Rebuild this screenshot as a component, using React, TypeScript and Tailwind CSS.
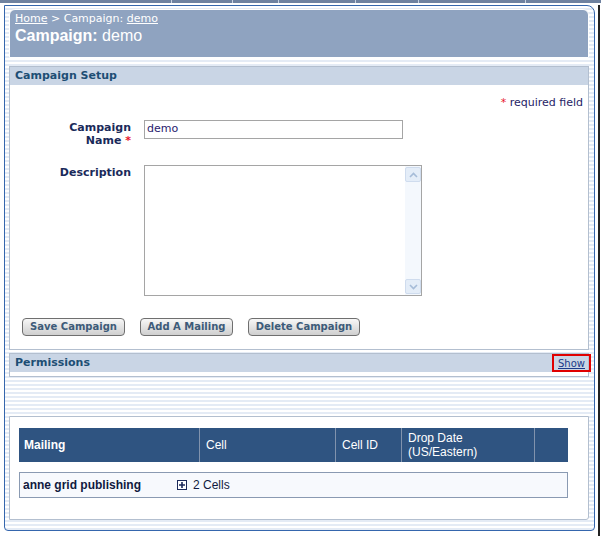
import React from 'react';

const stripes =
  'bg-[repeating-linear-gradient(180deg,#ffffff_0px,#ffffff_2px,#e4ebf5_2px,#e4ebf5_4px)]';

const Button: React.FC<{ label: string; width: string }> = ({ label, width }) => (
  <button
    className={`${width} h-[18px] rounded-[4px] border border-[#6f6f6f] bg-gradient-to-b from-[#f7f7f7] to-[#cfcfcf] text-[10px] font-bold leading-none text-[#3d5b79]`}
  >
    {label}
  </button>
);

const SectionHeader: React.FC<{ title: string; children?: React.ReactNode }> = ({ title, children }) => (
  <div className="flex h-[18px] items-center justify-between bg-[#c9d5e5] pl-[5px]">
    <span className="text-[11px] font-bold text-[#1d4e74]">{title}</span>
    {children}
  </div>
);

export default function App() {
  return (
    <div className="relative h-[539px] w-[601px] overflow-hidden bg-white font-['DejaVu_Sans',Verdana,sans-serif]">
      {/* top strip */}
      <div className="flex h-[3px] bg-[#6f82a0]">
        <div className="w-[172px] border-r border-[#c9d2e0]" />
        <div className="w-[61px] border-r border-[#c9d2e0]" />
        <div className="w-[46px] border-r border-[#c9d2e0]" />
        <div className="w-[77px] border-r border-[#c9d2e0]" />
        <div className="w-[63px] border-r border-[#c9d2e0]" />
        <div className="w-[107px] border-r border-[#c9d2e0]" />
        <div className="flex-1" />
      </div>

      <div className="mt-[2px] flex">
        <div
          className={`ml-[4px] h-[526px] w-[591px] rounded-tr-[8px] rounded-b-[4px] border border-[#3566ad] pl-[4px] pr-[5px] pt-[3px] ${stripes}`}
        >
          {/* page header */}
          <div className="h-[49px] rounded-t-[6px] border border-white bg-[#8fa3c0] pl-[5px] pt-[2px] text-white">
            <div className="text-[11px] leading-[14px]">
              <span className="underline">Home</span> &gt; Campaign: <span className="underline">demo</span>
            </div>
            <div className="font-['Liberation_Sans',Arial,sans-serif] text-[16px] leading-[19px]">
              <span className="font-bold">Campaign:</span> demo
            </div>
          </div>

          {/* campaign setup */}
          <div className="mt-[8px] h-[284px] border border-[#b3bfcf] bg-white">
            <SectionHeader title="Campaign Setup" />
            <div className="pr-[5px] pt-[11px] text-right text-[11px] leading-[13px] text-[#1f2466]">
              <span className="text-[#e8152c]">*</span> required field
            </div>
            <div className="mt-[11px] flex items-start">
              <div className="w-[121px] pt-[1px] text-right text-[11px] font-bold leading-[13px] text-[#1a2a5a]">
                Campaign
                <br />
                Name <span className="text-[#e8152c]">*</span>
              </div>
              <div className="ml-[13px] flex h-[19px] w-[259px] items-center border border-[#a5a5a5] pl-[2px] text-[11px] text-[#2a226e]">
                demo
              </div>
            </div>
            <div className="mt-[18px] flex items-start">
              <div className="w-[121px] pt-[1px] text-right text-[11px] font-bold leading-[13px] text-[#1a2a5a]">
                Description
              </div>
              <div className="ml-[13px] flex h-[131px] w-[278px] border border-[#a5a5a5]">
                <div className="flex-1" />
                <div className="flex w-[16px] flex-col justify-between bg-[#f4f8fd] py-[1px]">
                  <div className="flex h-[15px] items-center justify-center rounded-[2px] border border-[#cfdcee] bg-[#e4edf8]">
                    <svg width="9" height="6" viewBox="0 0 9 6">
                      <path d="M1 5 L4.5 1.5 L8 5" stroke="#a6bcd8" strokeWidth="1.6" fill="none" />
                    </svg>
                  </div>
                  <div className="flex h-[15px] items-center justify-center rounded-[2px] border border-[#cfdcee] bg-[#e4edf8]">
                    <svg width="9" height="6" viewBox="0 0 9 6">
                      <path d="M1 1 L4.5 4.5 L8 1" stroke="#a6bcd8" strokeWidth="1.6" fill="none" />
                    </svg>
                  </div>
                </div>
              </div>
            </div>
            <div className="ml-[12px] mt-[22px] flex gap-[15px]">
              <Button label="Save Campaign" width="w-[103px]" />
              <Button label="Add A Mailing" width="w-[93px]" />
              <Button label="Delete Campaign" width="w-[112px]" />
            </div>
          </div>

          {/* permissions */}
          <div className="mt-[3px] h-[24px] border border-[#b3bfcf] bg-white">
            <SectionHeader title="Permissions">
              <a className="-mr-[3px] flex h-[18px] w-[39px] items-center justify-center border-2 border-[#e00000] text-[10px] text-[#1a3a8a] underline">
                Show
              </a>
            </SectionHeader>
          </div>

          {/* mailing table */}
          <div className="mt-[39px] h-[104px] rounded-br-[3px] border border-[#b3bfcf] bg-white pl-[9px] pr-[20px] pt-[11px] font-['Liberation_Sans',Arial,sans-serif]">
            <div className="grid h-[34px] grid-cols-[181px_136px_66px_133px_1fr] bg-[#2f5481] text-[12px] leading-[14px] text-white">
              <div className="flex items-center border-r border-[#8193ad] pl-[5px] font-bold">Mailing</div>
              <div className="flex items-center border-r border-[#8193ad] pl-[6px]">Cell</div>
              <div className="flex items-center border-r border-[#8193ad] pl-[6px]">Cell ID</div>
              <div className="flex items-center border-r border-[#8193ad] pl-[6px]">
                Drop Date
                <br />
                (US/Eastern)
              </div>
              <div />
            </div>
            <div className="mt-[10px] flex h-[26px] items-center border border-[#8a9ab2] bg-[#f7f9fd] text-[12px] text-[#111a40]">
              <div className="w-[157px] pl-[3px] font-bold">anne grid publishing</div>
              <div className="flex items-center">
                <span className="flex h-[10px] w-[10px] items-center justify-center border border-[#1c2a5a] bg-white">
                  <svg width="6" height="6" viewBox="0 0 6 6">
                    <path d="M0 3 H6 M3 0 V6" stroke="#1c2a5a" strokeWidth="1.6" />
                  </svg>
                </span>
                <span className="ml-[6px]">2 Cells</span>
              </div>
            </div>
          </div>
        </div>
        <div className="ml-auto mr-[1px] h-[531px] w-[2px] bg-[#222]" />
      </div>
      <div className="mt-[4px] h-[2px] bg-[#111]" />
    </div>
  );
}
